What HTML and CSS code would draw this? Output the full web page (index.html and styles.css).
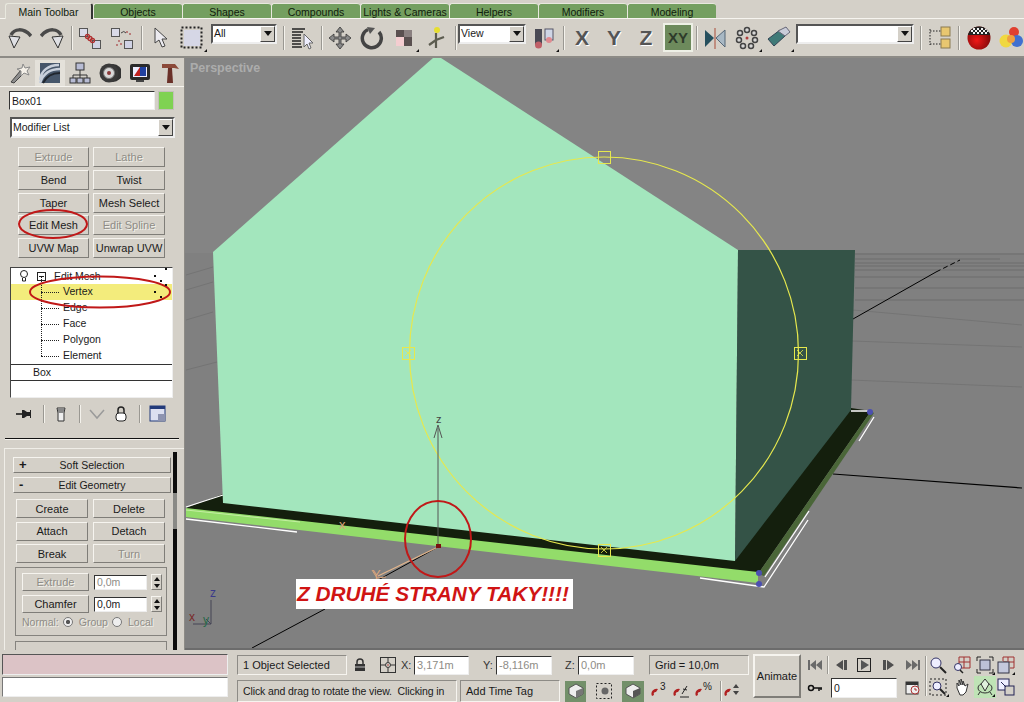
FILE: index.html
```html
<!DOCTYPE html>
<html lang="cs">
<head>
<meta charset="utf-8">
<title>3ds Max</title>
<link rel="stylesheet" href="styles.css">
</head>
<body>
<div class="app">
  <div class="tabs">
    <div class="tab active">Main Toolbar</div>
    <div class="tab">Objects</div>
    <div class="tab">Shapes</div>
    <div class="tab">Compounds</div>
    <div class="tab">Lights &amp; Cameras</div>
    <div class="tab">Helpers</div>
    <div class="tab">Modifiers</div>
    <div class="tab">Modeling</div>
  </div>
  <div class="toolbar">
    <div class="tb"><svg class="i24" viewBox="0 0 24 24"><path d="M3 9C6 3 15 1 23 10" fill="none" stroke="#4a4a4a" stroke-width="3.5"/><path d="M1 10l11 1-6 11z" fill="#dfe0e4" stroke="#333"/></svg></div>
    <div class="tb"><svg class="i24" viewBox="0 0 24 24"><path d="M21 9C18 3 9 1 1 10" fill="none" stroke="#4a4a4a" stroke-width="3.5"/><path d="M23 10l-11 1 6 11z" fill="#dfe0e4" stroke="#333"/></svg></div>
    <div class="sep"></div>
    <div class="tb"><svg class="i24" viewBox="0 0 24 24"><rect x="1.5" y="2.5" width="8" height="8" fill="#d9dae8" stroke="#555"/><rect x="14.5" y="14.5" width="8" height="8" fill="#d0d2e4" stroke="#555"/><g fill="none" stroke="#b03030" stroke-width="1.3"><circle cx="9.5" cy="10.5" r="2"/><circle cx="12" cy="12.5" r="2"/><circle cx="14.5" cy="14.5" r="2"/></g></svg></div>
    <div class="tb"><svg class="i24" viewBox="0 0 24 24"><rect x="1.500" y="2.500" width="8" height="8" fill="#d9dae8" stroke="#555"/><rect x="14.500" y="14.500" width="8" height="8" fill="#d0d2e4" stroke="#555"/><path d="M11 7q3-3 5 0" fill="none" stroke="#444"/><g fill="#b06060"><circle cx="17" cy="6" r="1"/><circle cx="20" cy="8" r="1"/><circle cx="9" cy="15" r="1"/><circle cx="11" cy="18" r="1"/><circle cx="7" cy="19" r="1"/></g></svg></div>
    <div class="sep"></div>
    <div class="tb"><svg class="i24" viewBox="0 0 24 24"><path d="M7 2v15l4-3 3 7 3-1-3-7h5z" fill="#ecebf0" stroke="#444"/></svg></div>
    <div class="tb fly"><svg class="i24" viewBox="0 0 24 24"><rect x="4" y="4" width="16" height="16" fill="#d6d7e6"/><rect x="1.500" y="1.500" width="20" height="20" fill="none" stroke="#222" stroke-width="2" stroke-dasharray="2 2"/></svg></div>
    <div class="drop d-all"><span class="drop-val">All</span><span class="drop-btn"><i></i></span></div>
    <div class="sep sep-wide"></div>
    <div class="tb"><svg class="i24" viewBox="0 0 24 24"><path d="M2 3h13M2 6h11M2 9h9M2 12h9M2 15h9M2 18h9M2 21h10" stroke="#222" stroke-width="1.500"/><path d="M14 8v13l3-3 2 5 2-1-2-5h4z" fill="#eef" stroke="#666"/></svg></div>
    <div class="sep"></div>
    <div class="tb"><svg class="i24" viewBox="0 0 24 24"><path d="M12 1l4 5h-3v5h5V8l5 4-5 4v-3h-5v5h3l-4 5-4-5h3v-5H6v3l-5-4 5-4v3h5V6H8z" fill="#8a8a8a" stroke="#333" stroke-width=".8"/></svg></div>
    <div class="tb"><svg class="i24" viewBox="0 0 24 24"><path d="M8 3.500A9.500 9.500 0 1 0 19 6" fill="none" stroke="#444" stroke-width="3.500"/><path d="M7 1l8 1-5 6z" fill="#555"/></svg></div>
    <div class="tb fly"><svg class="i24" viewBox="0 0 24 24"><rect x="4" y="4" width="16" height="16" fill="#5a5050"/><rect x="4" y="11" width="8" height="9" fill="#f4cdd0"/><path d="M12 4h8v7h-8z" fill="#8a8080"/></svg></div>
    <div class="tb"><svg class="i24" viewBox="0 0 24 24"><path d="M12 7v8M12 14l-7 5M12 14l8-3M12 15v7" stroke="#5c5c50" stroke-width="2.200" fill="none"/><circle cx="13" cy="4" r="3" fill="#e6de30"/></svg></div>
    <div class="sep"></div>
    <div class="drop d-view"><span class="drop-val">View</span><span class="drop-btn"><i></i></span></div>
    <div class="tb tb-pivot fly"><svg class="i24" viewBox="0 0 24 24"><rect x="3" y="3" width="7" height="16" fill="#4a4a55"/><rect x="13" y="3" width="8" height="11" fill="#cfd6e6" stroke="#556"/><circle cx="6.500" cy="19" r="3.500" fill="#c06068"/><circle cx="17" cy="14" r="3" fill="#e08a90"/></svg></div>
    <div class="sep"></div>
    <div class="tb axis">X</div>
    <div class="tb axis">Y</div>
    <div class="tb axis">Z</div>
    <div class="tb axis-xy">XY</div>
    <div class="sep"></div>
    <div class="tb"><svg class="i24" viewBox="0 0 24 24"><path d="M2 4l9 8-9 9z" fill="#26505e"/><path d="M22 4l-9 8 9 9z" fill="#a8b8c4" stroke="#567"/><path d="M12 2v21" stroke="#b87868" stroke-width="1.500"/></svg></div>
    <div class="tb fly"><svg class="i24" viewBox="0 0 24 24"><g fill="#d6d6d6" stroke="#444" stroke-width="1.500"><circle cx="12" cy="4" r="2.500"/><circle cx="19" cy="7" r="2.500"/><circle cx="20" cy="14" r="2.500"/><circle cx="16" cy="20" r="2.500"/><circle cx="8" cy="20" r="2.500"/><circle cx="4" cy="14" r="2.500"/><circle cx="5" cy="7" r="2.500"/></g><circle cx="12" cy="12" r="1.500" fill="#b04040"/></svg></div>
    <div class="tb tb-align fly"><svg class="i24" viewBox="0 0 24 24"><path d="M1 13L13 4l5 6-11 10z" fill="#3f7a78" stroke="#345"/><path d="M11 5l8-4 4 5-5 4z" fill="#c9ccd8" stroke="#667"/></svg></div>
    <div class="drop d-sel"><span class="drop-val"></span><span class="drop-btn"><i></i></span></div>
    <div class="sep sep-wide"></div>
    <div class="tb"><svg class="i24" viewBox="0 0 24 24"><path d="M3 3v16M3 5h12M3 18h12" stroke="#222" stroke-dasharray="1.500 1.500" fill="none"/><rect x="14" y="1" width="9" height="9" fill="#e8c770" stroke="#8a7a50"/><rect x="14" y="13" width="9" height="9" fill="#e8c770" stroke="#8a7a50"/></svg></div>
    <div class="sep"></div>
    <div class="tb tb-mat"><svg class="i24" viewBox="0 0 24 24"><defs><radialGradient id="rb" cx=".4" cy=".6" r=".7"><stop offset="0" stop-color="#f01818"/><stop offset="1" stop-color="#700808"/></radialGradient><clipPath id="ballclip"><circle cx="12" cy="12" r="11.500"/></clipPath></defs><circle cx="12" cy="12" r="11.500" fill="url(#rb)"/><g clip-path="url(#ballclip)"><rect y="0" width="24" height="9" fill="#222"/><path d="M2 2h2v2H2zM6 2h2v2H6zM10 2h2v2h-2zM14 2h2v2h-2zM18 2h2v2h-2zM4 4h2v2H4zM8 4h2v2H8zM12 4h2v2h-2zM16 4h2v2h-2zM20 4h2v2h-2zM6 6h2v2H6zM10 6h2v2h-2zM14 6h2v2h-2zM18 6h2v2h-2z" fill="#f2f2f2"/></g></svg></div>
    <div class="tb"><svg class="i24" viewBox="0 0 24 24"><circle cx="15" cy="6" r="5" fill="#e04030"/><circle cx="7" cy="15" r="6.500" fill="#f0d840"/><circle cx="18" cy="15" r="6" fill="#4070d0"/><circle cx="12" cy="13" r="4" fill="#f0a040"/></svg></div>
  </div>

  <div class="main">
    <aside class="panel">
      <div class="cmd-tabs">
        <div class="cmd"><svg class="i22" viewBox="0 0 22 22"><path d="M2 20L12 8l3 3L5 21z" fill="#8d8d8d" stroke="#444"/><path d="M14 2l2 4 5-1-3 4 2 4-5-2-3 3 0-5-4-2 5-1z" fill="#f4f0e8" stroke="#888"/></svg></div>
        <div class="cmd cmd-on"><svg class="i22" viewBox="0 0 22 22"><rect x="1" y="1" width="20" height="20" fill="#46566a"/><path d="M1 18C2 9 9 3 20 3M1 21C4 12 11 7 21 7" fill="none" stroke="#c8d0dc" stroke-width="2.500"/><path d="M4 21C7 15 13 11 21 11" fill="none" stroke="#20262e" stroke-width="2"/></svg></div>
        <div class="cmd"><svg class="i22" viewBox="0 0 22 22"><rect x="7" y="1" width="8" height="7" fill="#b8bcd4" stroke="#333"/><path d="M11 8v5M4 17v-4h14v4M11 13v4" fill="none" stroke="#333"/><rect x="1" y="16" width="6" height="5" fill="#b8bcd4" stroke="#333"/><rect x="8" y="16" width="6" height="5" fill="#b8bcd4" stroke="#333"/><rect x="15" y="16" width="6" height="5" fill="#b8bcd4" stroke="#333"/></svg></div>
        <div class="cmd"><svg class="i22" viewBox="0 0 22 22"><circle cx="14" cy="11" r="9" fill="#333"/><circle cx="10" cy="11" r="9.500" fill="#3a3a3a"/><circle cx="10" cy="11" r="5.500" fill="#d8d8d8" stroke="#777"/><circle cx="10" cy="11" r="2" fill="#8b3a3a"/></svg></div>
        <div class="cmd"><svg class="i22" viewBox="0 0 22 22"><rect x="1" y="2" width="20" height="16" rx="2" fill="#2a2a2a"/><rect x="4" y="5" width="14" height="10" fill="#eef"/><path d="M5 14l6-9v9z" fill="#c02020"/><path d="M11 5h6v9h-6z" fill="#2040a0"/><rect x="7" y="18" width="8" height="2" fill="#444"/></svg></div>
        <div class="cmd"><svg class="i22" viewBox="0 0 22 22"><path d="M3 2h13l4 5-5-1H3z" fill="#8c4a3a"/><path d="M9 6h4l1 15H8z" fill="#6a3028"/></svg></div>
      </div>
      <div class="name-row">
        <div class="field name-field">Box01</div>
        <div class="swatch"></div>
      </div>
      <div class="drop d-mod"><span class="drop-val">Modifier List</span><span class="drop-btn"><i></i></span></div>
      <div class="mod-grid">
        <div class="btn off">Extrude</div><div class="btn off">Lathe</div>
        <div class="btn">Bend</div><div class="btn">Twist</div>
        <div class="btn">Taper</div><div class="btn">Mesh Select</div>
        <div class="btn">Edit Mesh</div><div class="btn off">Edit Spline</div>
        <div class="btn">UVW Map</div><div class="btn">Unwrap UVW</div>
      </div>
      <div class="stack">
        <div class="st st-top"><svg class="bulb" viewBox="0 0 10 12"><circle cx="5" cy="4" r="3.500" fill="#fff" stroke="#222"/><path d="M3.500 8v3h3V8" fill="none" stroke="#222"/></svg><svg class="minus" viewBox="0 0 9 9"><rect x=".5" y=".5" width="8" height="8" fill="#fff" stroke="#222"/><path d="M2 4.500h5" stroke="#222"/></svg><span>Edit Mesh</span></div>
        <div class="st st-sub sel">Vertex</div>
        <div class="st st-sub">Edge</div>
        <div class="st st-sub">Face</div>
        <div class="st st-sub">Polygon</div>
        <div class="st st-sub">Element</div>
        <div class="st st-base">Box</div>
      </div>
      <div class="stack-tools">
        <svg class="i18 t-pin" viewBox="0 0 18 18"><path d="M1 9h6" stroke="#111" stroke-width="1.500"/><path d="M7 5h2l3 2h3v-2h1v8h-1v-2h-3l-3 2H7z" fill="#222"/></svg>
        <div class="sep t-sep"></div>
        <svg class="i18 t-fork" viewBox="0 0 18 18"><path d="M5 3h8l-1 5v8H6V8z" fill="#eee" stroke="#333"/><path d="M6 3h6v5H6z" fill="#888"/></svg>
        <div class="sep t-sep"></div>
        <svg class="i18 t-v" viewBox="0 0 18 18"><path d="M2 5l7 8 7-8" fill="none" stroke="#9a9a9a" stroke-width="1.500"/></svg>
        <svg class="i18 t-lock" viewBox="0 0 18 18"><rect x="4" y="8" width="10" height="8" rx="3" fill="#fff" stroke="#222"/><path d="M6 8V5a3 3 0 0 1 6 0v3" fill="none" stroke="#222" stroke-width="1.500"/></svg>
        <div class="sep t-sep2"></div>
        <svg class="i18 t-cfg" viewBox="0 0 18 18"><rect x="1" y="1" width="15" height="15" fill="#dcdff0" stroke="#223a7a"/><rect x="1" y="1" width="15" height="3" fill="#223a7a"/><path d="M9 9h7v7H9z" fill="#8d93b0"/></svg>
      </div>
      <div class="divider"></div>
      <div class="rollups">
        <div class="roll-main">
          <div class="roll-head"><b>+</b><span>Soft Selection</span></div>
          <div class="roll-head roll-head2"><b>-</b><span>Edit Geometry</span></div>
          <div class="geo-grid">
            <div class="btn">Create</div><div class="btn">Delete</div>
            <div class="btn">Attach</div><div class="btn">Detach</div>
            <div class="btn">Break</div><div class="btn off">Turn</div>
          </div>
          <div class="group">
            <div class="g-row">
              <div class="btn off g-btn">Extrude</div>
              <div class="field spin-field off-text">0,0m</div>
              <div class="spin"><i></i><i class="dn"></i></div>
            </div>
            <div class="g-row g-row2">
              <div class="btn g-btn">Chamfer</div>
              <div class="field spin-field">0,0m</div>
              <div class="spin"><i></i><i class="dn"></i></div>
            </div>
            <div class="normal"><span>Normal:</span><i class="radio on"></i><span>Group</span><i class="radio"></i><span>Local</span></div>
          </div>
          <div class="group group-next"></div>
        </div>
        <div class="scroll"><div class="thumb"></div></div>
      </div>
      <svg class="overlay" viewBox="0 58 185 592">
        <ellipse cx="53" cy="224" rx="34" ry="14" fill="none" stroke="#c01818" stroke-width="2"/>
        <ellipse cx="100" cy="292" rx="70" ry="15.500" fill="none" stroke="#c01818" stroke-width="2"/>
        <g fill="#111"><rect x="154" y="275" width="2" height="2"/><rect x="165" y="268" width="2" height="2"/><rect x="160" y="280" width="2" height="2"/><rect x="165" y="284" width="2" height="2"/><rect x="154" y="291" width="2" height="2"/><rect x="160" y="296" width="2" height="2"/></g>
      </svg>
    </aside>

    <section class="viewport">
      <svg class="scene" viewBox="185 58 839 592">
        <rect x="185" y="58" width="839" height="592" fill="#808080"/>
        <rect x="185" y="58" width="839" height="195" fill="#848484"/>
        <g stroke="#6c6c6c" fill="none">
          <path d="M855 254H1024M855 259H1000M855 263H1024M855 266H1024M855 270H1024M855 277H1024M855 288H1024M855 300H1024" stroke-width="1"/>
          <path d="M853 310L1022 325M852 341L1022 347M851 380L1022 387" stroke="#747474"/>
          <path d="M186 275L213 267M186 290L213 282M186 320L213 312M186 370L217 362" stroke="#747474"/>
        </g>
        <path d="M853 319L936 272" stroke="#000"/>
        <path d="M936 272L960 260" stroke="#000" stroke-dasharray="5 3"/>
        <path d="M833 474L1022 488" stroke="#000" stroke-width="1.200"/>
        <path d="M252 648L325 609M378 580L438 547" stroke="#000"/>
        <polygon points="186,508 223,494 735,552 851,408 871,411 758,574 186,510" fill="#141f0d"/>
        <polygon points="186,508 758,572 758,583 186,517" fill="#93dc6a"/>
        <polygon points="871,411 874,413 764,576 758,574" fill="#4a6638"/>
        <polygon points="213,252 433,58 441,58 738,250 735,561 223,503" fill="#a3e6bd"/>
        <polygon points="738,250 855,250 851,410 735,561" fill="#345347"/>
        <path d="M186 510L300 522" stroke="#c4eea2" fill="none"/>
        <g stroke="#fff" fill="none" stroke-width="1.300">
          <path d="M186 507L223 495M186 519L297 532M700 578L764 587L808 520M765 577L809 511M859 441L874 417M851 411L870 411"/>
        </g>
        <g fill="#4b4fb0"><circle cx="759" cy="573" r="3"/><circle cx="759" cy="584" r="3"/><circle cx="870" cy="412" r="3"/></g>
        <ellipse cx="604" cy="353" rx="194.500" ry="196" fill="none" stroke="#e6e84e" stroke-width="1.200"/>
        <g fill="none" stroke="#e6e84e">
          <rect x="598.500" y="151.500" width="12" height="12"/>
          <rect x="402.500" y="347.500" width="12" height="12"/>
          <rect x="794.500" y="347.500" width="12" height="12"/>
          <rect x="598.500" y="544.500" width="12" height="12"/>
          <path d="M797 350l6 6m0-6l-6 6M601 547l6 6m0-6l-6 6M405 350l6 6m0-6l-6 6" stroke-width=".8"/>
        </g>
        <path d="M438 428V546" stroke="#555"/>
        <path d="M434 438l4-13 4 13" fill="none" stroke="#555"/>
        <text x="436" y="423" class="g-label g-z">z</text>
        <path d="M438 547L378 576" stroke="#e2b48a" stroke-width="1.300"/>
        <path d="M372 570l5 8 9-1" fill="none" stroke="#d8a47c"/>
        <text x="372" y="579" class="g-label g-xy">Y</text>
        <text x="339" y="529" class="g-label g-xy">x</text>
        <rect x="436" y="544" width="5" height="4" fill="#7a1010"/>
        <ellipse cx="438" cy="539" rx="33" ry="38" fill="none" stroke="#c01818" stroke-width="2"/>
        <path d="M211 624V600M193 624H211M211 624L206 619" stroke="#445"/>
        <text x="210" y="597" class="tri tri-z">z</text>
        <text x="189" y="621" class="tri tri-x">x</text>
        <text x="203" y="624" class="tri tri-y">y</text>
      </svg>
      <div class="vp-label">Perspective</div>
      <div class="caption">Z DRUHÉ STRANY TAKY!!!!</div>
    </section>
  </div>

  <div class="bottom">
    <div class="script">
      <div class="script-pink"></div>
      <div class="script-white"></div>
    </div>
    <div class="status">
      <div class="s-row">
        <div class="inset w-sel">1 Object Selected</div>
        <div class="s-ic s-lock"><svg class="i14" viewBox="0 0 14 14"><rect x="2" y="6" width="10" height="7" fill="#333"/><path d="M4 6V4a3 3 0 0 1 6 0v2" fill="none" stroke="#333" stroke-width="1.500"/><path d="M2 9h10" stroke="#bbb"/></svg></div>
        <div class="s-cross"><svg class="i16" viewBox="0 0 16 16"><rect x=".5" y=".5" width="15" height="15" fill="none" stroke="#333"/><circle cx="8" cy="8" r="2.500" fill="none" stroke="#333"/><path d="M8 0v5M8 11v5M0 8h5M11 8h5" stroke="#333"/><circle cx="8" cy="8" r=".8" fill="#a33"/></svg></div>
        <div class="lbl l-x">X:</div><div class="field coord off-text w-x">3,171m</div>
        <div class="lbl l-y">Y:</div><div class="field coord off-text w-y">-8,116m</div>
        <div class="lbl l-z">Z:</div><div class="field coord off-text w-y">0,0m</div>
        <div class="inset w-grid">Grid = 10,0m</div>
      </div>
      <div class="s-row s-row2">
        <div class="inset w-prompt">Click and drag to rotate the view.  Clicking in</div>
        <div class="inset w-tag">Add Time Tag</div>
        <div class="s-tog tog1"><svg class="i16" viewBox="0 0 16 16"><path d="M8 1l7 4v6l-7 4-7-4V5z" fill="#eee" stroke="#555"/><path d="M8 8l7-3v6l-7 4z" fill="#777"/></svg></div>
        <div class="s-ic s-ws"><svg class="i16" viewBox="0 0 16 16"><rect x=".5" y=".5" width="15" height="15" fill="none" stroke="#222" stroke-dasharray="2 2"/><circle cx="9" cy="8" r="3.500" fill="#666"/></svg></div>
        <div class="s-tog tog2"><svg class="i16" viewBox="0 0 16 16"><path d="M8 1l7 4v6l-7 4-7-4V5z" fill="#eee" stroke="#555"/><path d="M8 8l7-3v6l-7 4z" fill="#555"/></svg></div>
        <div class="s-ic s-mag"><svg class="i20" viewBox="0 0 20 20"><path d="M3 15a5 5 0 0 1 6-7l-2 3a2 2 0 0 0-2 3l-2 1z" fill="#b02020"/><text x="11" y="9" class="mag-t">3</text></svg></div>
        <div class="s-ic s-mag"><svg class="i20" viewBox="0 0 20 20"><path d="M3 15a5 5 0 0 1 6-7l-2 3a2 2 0 0 0-2 3l-2 1z" fill="#b02020"/><path d="M9 16h9M11 13l5-8M12 8l4 1" stroke="#222" fill="none"/></svg></div>
        <div class="s-ic s-mag"><svg class="i20" viewBox="0 0 20 20"><path d="M3 15a5 5 0 0 1 6-7l-2 3a2 2 0 0 0-2 3l-2 1z" fill="#b02020"/><text x="10" y="9" class="mag-t">%</text></svg></div>
        <div class="sep s-sep"></div>
        <div class="s-ic s-mag2"><svg class="i20" viewBox="0 0 20 20"><path d="M3 15a5 5 0 0 1 6-7l-2 3a2 2 0 0 0-2 3l-2 1z" fill="#b02020"/><path d="M14 3l3 4h-6zM14 14l3-4h-6z" fill="#444"/></svg></div>
      </div>
    </div>
    <div class="animate">Animate</div>
    <div class="transport">
      <div class="t-row">
        <div class="tp"><svg class="i16" viewBox="0 0 16 16"><path d="M1 3h2v10H1zM3 8l6-5v10zM9 8l6-5v10z" fill="#6a6a6a"/></svg></div>
        <div class="sep tp-sep"></div>
        <div class="tp"><svg class="i16" viewBox="0 0 16 16"><path d="M3 8l7-5v10zM11 3h3v10h-3z" fill="#4f4f4f"/></svg></div>
        <div class="tp"><svg class="i16" viewBox="0 0 16 16"><rect x=".5" y="1.500" width="13" height="13" fill="none" stroke="#222"/><path d="M4 3l8 5-8 5z" fill="#555"/></svg></div>
        <div class="tp"><svg class="i16" viewBox="0 0 16 16"><path d="M2 3h3v10H2zM6 3l7 5-7 5z" fill="#4f4f4f"/></svg></div>
        <div class="tp"><svg class="i16" viewBox="0 0 16 16"><path d="M1 3l6 5-6 5zM7 3l6 5-6 5zM13 3h2v10h-2z" fill="#6a6a6a"/></svg></div>
      </div>
      <div class="t-row t-row2">
        <div class="tp"><svg class="i16" viewBox="0 0 16 16"><circle cx="4" cy="8" r="2.500" fill="none" stroke="#111" stroke-width="1.500"/><path d="M6 8h9M12 8v3M14 8v2" stroke="#111" stroke-width="1.500"/></svg></div>
        <div class="field frame">0</div>
        <div class="tp tp-clock"><svg class="i16" viewBox="0 0 16 16"><rect x="1" y="2" width="12" height="12" fill="#eee" stroke="#333"/><rect x="1" y="2" width="12" height="3" fill="#333"/><circle cx="10" cy="10" r="4" fill="#eee" stroke="#a33"/><path d="M10 8v2h2" stroke="#a33" fill="none"/></svg></div>
      </div>
    </div>
    <div class="sep nav-sep"></div>
    <div class="nav">
      <div class="nv"><svg class="i18" viewBox="0 0 18 18"><circle cx="7" cy="7" r="5" fill="#eef" stroke="#336"/><path d="M11 11l6 6" stroke="#222" stroke-width="2"/></svg></div>
      <div class="nv"><svg class="i18" viewBox="0 0 18 18"><path d="M6 1h11v11H6zM6 6h11M11 1v11" fill="none" stroke="#a03030"/><circle cx="5" cy="11" r="3.500" fill="#eef" stroke="#336"/><path d="M7 14l3 3" stroke="#222" stroke-width="1.500"/></svg></div>
      <div class="nv fly"><svg class="i18" viewBox="0 0 18 18"><rect x="4" y="4" width="10" height="10" fill="#bcc0d8" stroke="#334"/><path d="M1 5V1h4M13 1h4v4M17 13v4h-4M5 17H1v-4" fill="none" stroke="#222"/></svg></div>
      <div class="nv fly"><svg class="i18" viewBox="0 0 18 18"><path d="M6 1h11v11h-4M6 1v4M6 6h11M11 1v4" fill="none" stroke="#a03030"/><rect x="1" y="6" width="11" height="11" fill="#c4c8dc" stroke="#334"/></svg></div>
      <div class="nv fly"><svg class="i18" viewBox="0 0 18 18"><rect x="1" y="1" width="16" height="16" fill="none" stroke="#222" stroke-dasharray="2 2"/><circle cx="8" cy="8" r="4" fill="#eef" stroke="#336"/><path d="M11 11l5 5" stroke="#222" stroke-width="2"/></svg></div>
      <div class="nv"><svg class="i18" viewBox="0 0 18 18"><path d="M4 10V5l2 3V2l2 5V1l2 6V3l2 5 3-2-2 8-3 3H7z" fill="#fff" stroke="#333"/></svg></div>
      <div class="nv nv-on fly"><svg class="i18" viewBox="0 0 18 18"><ellipse cx="9" cy="10" rx="7" ry="5" fill="none" stroke="#333"/><path d="M9 1l4 5-4 7-4-7z" fill="#dff0dc" stroke="#333"/><path d="M4 14l-2 3M14 14l2 3" stroke="#333"/></svg></div>
      <div class="nv"><svg class="i18" viewBox="0 0 18 18"><rect x="1" y="1" width="11" height="11" fill="#eef" stroke="#225"/><rect x="8" y="8" width="9" height="9" fill="#d4d0c8" stroke="#225"/><path d="M4 4l5 5" stroke="#225"/></svg></div>
    </div>
  </div>
</div>
</body>
</html>
```
FILE: styles.css
```css
* { box-sizing: border-box; }
html, body { margin: 0; padding: 0; height: 100%; overflow: hidden; }
body { background: #d4d0c8; font: 11px "Liberation Sans", Arial, sans-serif; color: #1a1a1a; }
svg { display: block; flex: none; }
.app { width: 1024px; height: 702px; display: flex; flex-direction: column; overflow: hidden; }
.i14 { width: 14px; height: 14px; }
.i16 { width: 16px; height: 16px; }
.i18 { width: 18px; height: 18px; }
.i20 { width: 20px; height: 20px; }
.i22 { width: 22px; height: 22px; }
.i24 { width: 24px; height: 24px; }

.tabs { height: 19px; display: flex; padding: 3px 0 0 5px; border-bottom: 1px solid #f6f4ef; }
.tab { width: 89px; height: 15px; background: #749f60; border-top: 1px solid #e8e8de; border-left: 1px solid #e8e8de; border-radius: 3px 3px 0 0; text-align: center; line-height: 16px; color: #10200c; font-size: 10.5px; white-space: nowrap; }
.tab.active { width: 88px; height: 16px; background: #d4d0c8; border-right: 2px solid #333; }

.toolbar { height: 39px; display: flex; align-items: center; padding: 0 0 0 4px; position: relative; border-bottom: 2px solid #8d8b86; }
.tb { width: 32px; height: 30px; flex: none; display: flex; align-items: center; justify-content: center; position: relative; }
.sep { width: 2px; height: 24px; flex: none; margin: 0 1px 0 3px; background: #f4f2ec; border-left: 1px solid #9a9892; }
.sep-wide { margin-left: 6px; }
.fly::after { content: ""; position: absolute; right: 1px; bottom: 1px; width: 0; height: 0; border-left: 3px solid transparent; border-bottom: 3px solid #111; }
.axis { font: bold 21px "Liberation Sans", Arial, sans-serif; color: #555; text-shadow: 1px 1px 0 #fff; }
.axis-xy { width: 30px; margin-left: 1px; height: 29px; background: #6d8a5c; border: 2px solid #eef0e6; font: bold 15px "Liberation Sans", Arial, sans-serif; color: #2e3a2a; }
.tb-pivot { margin-left: 2px; }
.tb-align { margin-right: 1px; }
.tb-mat { margin-left: 2px; }

.drop { display: flex; height: 20px; flex: none; background: #fff; border: 2px solid; border-color: #555 #eee #eee #555; }
.drop-val { flex: 1; padding-left: 1px; line-height: 15px; font-size: 10.5px; white-space: nowrap; }
.drop-btn { width: 15px; background: #d4d0c8; border: 1px solid; border-color: #fff #444 #444 #fff; display: flex; align-items: center; justify-content: center; }
.drop-btn i { border: 4px solid transparent; border-top: 5px solid #111; border-bottom: 0; }
.d-all { width: 66px; margin-left: 3px; margin-top: -8px; }
.d-view { width: 68px; margin-top: -8px; }
.d-sel { width: 118px; margin-top: -8px; }
.d-mod { width: 165px; height: 21px; margin: 7px 0 0 10px; }
.d-mod .drop-val { line-height: 17px; }

.main { height: 592px; display: flex; }
.panel { width: 185px; flex: none; position: relative; overflow: hidden; border-right: 1px solid #8d8b86; }
.overlay { position: absolute; left: 0; top: 0; width: 185px; height: 592px; pointer-events: none; }
.cmd-tabs { height: 29px; display: flex; padding: 2px 0 0 5px; border-bottom: 1px solid #f6f4ef; }
.cmd { width: 30px; height: 26px; flex: none; display: flex; align-items: center; justify-content: center; }
.cmd-on { background: #e4e1da; }
.name-row { display: flex; margin: 4px 0 0 9px; }
.field { background: #fff; border: 1px solid; border-color: #333 #eee #eee #333; line-height: 15px; padding-left: 2px; font-size: 10.5px; white-space: nowrap; }
.name-field { width: 146px; height: 19px; line-height: 18px; }
.swatch { width: 16px; height: 19px; margin-left: 3px; background: #7fd252; border: 1px solid #c2c0b8; }

.btn { background: #d4d0c8; border: 1px solid; border-color: #f6f4ef #7f7d78 #7f7d78 #f6f4ef; display: flex; align-items: center; justify-content: center; white-space: nowrap; font-size: 11px; }
.btn.off { color: #8e8c86; text-shadow: 1px 1px 0 #f2f0ea; }
.mod-grid { display: grid; grid-template-columns: 71px 72px; grid-auto-rows: 20px; column-gap: 4px; row-gap: 2.75px; margin: 9px 0 0 18px; }

.stack { width: 163px; height: 131px; margin: 9px 0 0 10px; background: #fff; border: 1px solid; border-color: #444 #eee #eee #444; position: relative; }
.st { height: 16px; line-height: 15px; font-size: 10.5px; position: relative; white-space: nowrap; }
.st-top { display: flex; align-items: center; }
.bulb { width: 10px; height: 12px; margin-left: 8px; }
.minus { width: 9px; height: 9px; margin-left: 8px; }
.st-top span { margin-left: 8px; }
.st-sub { padding-left: 52px; }
.st-sub::before { content: ""; position: absolute; left: 30px; top: 8px; width: 18px; border-top: 1px dotted #222; }
.st-sub::after { content: ""; position: absolute; left: 30px; top: -8px; height: 16px; border-left: 1px dotted #222; }
.st-sub.sel { background: #f3ec7c; }
.st-base { padding-left: 22px; border-top: 1px solid #333; border-bottom: 1px solid #333; height: 17px; }

.stack-tools { display: flex; align-items: center; height: 20px; margin-top: 6px; padding-left: 15px; }
.t-sep { height: 18px; margin: 0 0 0 10px; }
.t-fork { margin-left: 7px; }
.t-fork + .t-sep { margin-left: 9px; }
.t-v { margin-left: 7px; }
.t-lock { margin-left: 6px; }
.t-sep2 { height: 18px; margin: 0 0 0 9px; }
.t-cfg { margin-left: 8px; }
.divider { height: 2px; margin: 14px 5px 0 5px; background: #111; border-bottom: 1px solid #f6f4ef; }

.rollups { display: flex; margin: 8px 0 0 4px; height: 202px; border-top: 1px solid #f0eee8; }
.roll-main { width: 166px; padding: 8px 0 0 8px; border-left: 1px solid #f0eee8; }
.roll-head { height: 16px; display: flex; align-items: center; position: relative; background: #d4d0c8; border: 1px solid; border-color: #f6f4ef #7f7d78 #7f7d78 #f6f4ef; width: 158px; justify-content: center; font-size: 10.5px; }
.roll-head b { position: absolute; left: 5px; top: 0; font-size: 13px; line-height: 13px; }
.roll-head2 { margin-top: 4px; }
.geo-grid { display: grid; grid-template-columns: 72px 72px; grid-auto-rows: 19px; column-gap: 5px; row-gap: 3.500px; margin: 6px 0 0 3px; }
.group { width: 152px; height: 69px; margin: 4px 0 0 2px; border: 1px solid #85837e; padding: 5px 0 0 6px; }
.group-next { margin-top: 5px; height: 20px; }
.g-row { display: flex; align-items: center; height: 18px; }
.g-row2 { margin-top: 4px; }
.g-btn { width: 67px; height: 18px; }
.spin-field { width: 53px; height: 15px; margin-left: 5px; line-height: 13px; }
.off-text { color: #8e8c86; }
.spin { width: 11px; height: 16px; margin-left: 4px; display: flex; flex-direction: column; align-items: center; justify-content: space-around; border: 1px solid; border-color: #f6f4ef #7f7d78 #7f7d78 #f6f4ef; }
.spin i { border: 3px solid transparent; border-bottom: 4px solid #111; border-top: 0; }
.spin i.dn { border-top: 4px solid #111; border-bottom: 0; }
.normal { display: flex; align-items: center; margin: 3px 0 0 0; color: #8e8c86; font-size: 10.5px; text-shadow: 1px 1px 0 #f2f0ea; }
.radio { width: 10px; height: 10px; margin: 0 6px 0 4px; border-radius: 50%; background: #eee; border: 1px solid #777; flex: none; }
.radio.on { background: radial-gradient(#555 35%, #eee 40%); }
.scroll { width: 4px; margin: 3px 0 0 3px; height: 199px; background: #0c0c0c; padding-top: 41px; }
.thumb { height: 36px; background: #8a8a86; }

.viewport { flex: 1; position: relative; overflow: hidden; border-bottom: 2px solid #6c6c6c; background: #808080; }
.scene { width: 839px; height: 592px; }
.vp-label { position: absolute; left: 5px; top: 3px; color: #acacac; font-weight: bold; font-size: 12.5px; }
.caption { position: absolute; left: 111px; top: 521px; width: 277px; height: 30px; background: #fff; color: #d01414; font: italic bold 20.800px/29px "Liberation Sans", Arial, sans-serif; white-space: nowrap; padding-left: 1px; }
.g-label { font: 11px "Liberation Sans", Arial, sans-serif; }
.g-z { fill: #444; }
.g-xy { fill: #d8a47c; font-size: 13px; }
.tri { font: 12px "Liberation Sans", Arial, sans-serif; }
.tri-z { fill: #3a3a8a; }
.tri-x { fill: #7a2a2a; }
.tri-y { fill: #2a6a4a; }

.bottom { height: 52px; display: flex; }
.script { width: 226px; margin: 4px 0 0 2px; flex: none; }
.script-pink { height: 21px; background: #dcc3c6; border: 1px solid; border-color: #555 #eee #eee #555; }
.script-white { height: 20px; margin-top: 2px; background: #fff; border: 1px solid; border-color: #777 #eee #eee #777; }
.status { width: 516px; margin: 5px 0 0 9px; flex: none; }
.s-row { display: flex; height: 20px; align-items: center; }
.s-row2 { margin-top: 5px; height: 22px; }
.inset { border: 1px solid; border-color: #8d8b86 #f6f4ef #f6f4ef #8d8b86; height: 100%; display: flex; align-items: center; padding-left: 5px; white-space: pre; flex: none; overflow: hidden; }
.w-sel { width: 110px; }
.s-ic { display: flex; align-items: center; justify-content: center; flex: none; }
.s-lock { width: 20px; margin-left: 3px; }
.s-cross { margin-left: 10px; }
.lbl { width: 13px; flex: none; color: #333; font-size: 11px; }
.l-x { margin-left: 5px; }
.l-y { margin-left: 14px; }
.l-z { margin-left: 13px; }
.coord { height: 19px; line-height: 17px; font-size: 11px; }
.w-x { width: 55px; }
.w-y { width: 56px; }
.w-grid { width: 100px; margin-left: 15px; padding-left: 5px; }
.w-prompt { width: 220px; font-size: 10.500px; letter-spacing: -.1px; }
.w-tag { width: 100px; margin-left: 3px; }
.s-tog { height: 21px; flex: none; background: #73906a; display: flex; align-items: center; justify-content: center; }
.tog1 { width: 21px; margin-left: 5px; }
.s-ws { width: 24px; margin-left: 6px; }
.tog2 { width: 22px; margin-left: 6px; }
.s-mag { width: 22px; }
.tog2 + .s-mag { margin-left: 4px; }
.s-sep { height: 20px; margin: 0 0 0 6px; }
.s-mag2 { width: 20px; }
.mag-t { font: 10px "Liberation Sans", Arial, sans-serif; fill: #222; }

.animate { width: 48px; height: 44px; margin: 4px 0 0 0; flex: none; display: flex; align-items: center; justify-content: center; border: 2px solid; border-color: #f6f4ef #7f7d78 #7f7d78 #f6f4ef; font-size: 11px; }
.transport { width: 124px; padding: 5px 0 0 2px; flex: none; }
.t-row { display: flex; align-items: center; height: 20px; }
.t-row2 { margin-top: 3px; }
.tp { width: 24px; height: 20px; display: flex; align-items: center; justify-content: center; flex: none; }
.tp-sep { height: 18px; margin: 0; }
.frame { width: 66px; height: 20px; margin-left: 4px; line-height: 18px; }
.tp-clock { margin-left: 4px; }
.nav-sep { height: 40px; margin: 6px 0 0 0; }
.nav { display: grid; grid-template-columns: 24px 24px 22px 20px; grid-auto-rows: 22px; margin-top: 4px; margin-left: -1px; }
.nv { display: flex; align-items: center; justify-content: center; position: relative; }
.nv-on { background: #bfe3b6; }
```
